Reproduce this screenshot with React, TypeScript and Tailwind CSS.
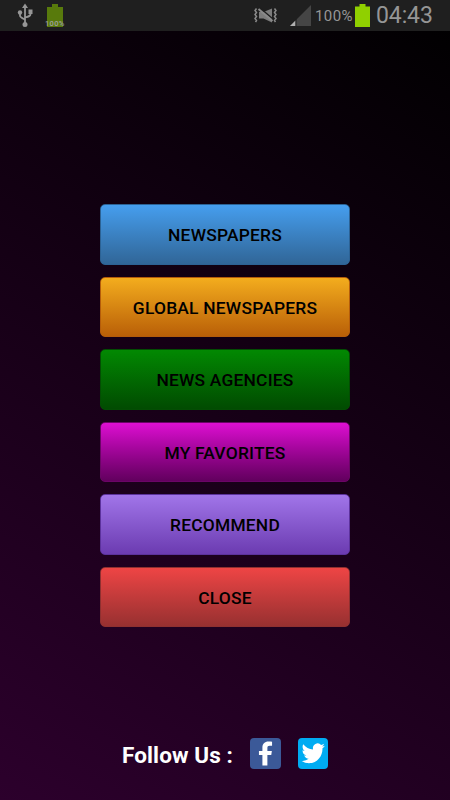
import type { ReactNode } from 'react'

interface MenuItem {
  label: string
  className: string
}

const MENU: MenuItem[] = [
  { label: 'NEWSPAPERS', className: 'from-[#469ff0] to-[#306596] border-[#2c6294]' },
  { label: 'GLOBAL NEWSPAPERS', className: 'from-[#f4ae1e] to-[#b85e07] border-[#b45c0a]' },
  { label: 'NEWS AGENCIES', className: 'from-[#028a02] to-[#014a01] border-[#034d03]' },
  { label: 'MY FAVORITES', className: 'from-[#e010d4] to-[#60005c] border-[#6a0566]' },
  { label: 'RECOMMEND', className: 'from-[#a276ea] to-[#6b3ab0] border-[#5c329c]' },
  { label: 'CLOSE', className: 'from-[#f04545] to-[#963030] border-[#8f3030]' },
]

export default function App(): React.JSX.Element {
  return (
    <div className="flex h-[800px] w-[450px] flex-col overflow-hidden bg-[linear-gradient(29.4deg,#2c002c,#000000)] font-[Roboto,sans-serif]">
      <StatusBar />
      <main className="flex flex-col items-center gap-[12px] pt-[173.4px]">
        {MENU.map((item) => (
          <button
            key={item.label}
            className={`h-[60.5px] w-[250px] rounded-[5px] border bg-linear-to-b bg-origin-border pt-px text-[17.4px] font-medium tracking-[0.22px] text-black ${item.className}`}
          >
            {item.label}
          </button>
        ))}
      </main>
      <footer className="mt-auto mb-[31px] flex h-[31px] items-center pl-[122px]">
        <span className="w-[128px] pt-[3px] text-[22.5px] leading-none font-bold tracking-[0.1px] whitespace-pre text-white">
          Follow Us :
        </span>
        <SocialButton className="bg-[#3b5998]" label="Facebook">
          <path
            fill="#fff"
            d="M12.2 27V16.8H8.8v-4h3.400V9.600c0-4 2.200-6.200 6-6.200 1.500 0 2.600.1 3.500.3v3.800h-2.300c-1.700 0-2.300.8-2.300 2.300v3h4.400l-.6 4h-3.800V27z"
          />
        </SocialButton>
        <SocialButton className="ml-[17px] bg-[#00acf2]" label="Twitter">
          <path
            fill="#fff"
            transform="translate(3.6 3) scale(.95 1)"
            d="M23.953 4.57a10 10 0 01-2.825.775 4.958 4.958 0 002.163-2.723c-.951.555-2.005.959-3.127 1.184a4.92 4.92 0 00-8.384 4.482C7.69 8.095 4.067 6.13 1.64 3.162a4.822 4.822 0 00-.666 2.475c0 1.71.87 3.213 2.188 4.096a4.904 4.904 0 01-2.228-.616v.06a4.923 4.923 0 003.946 4.827 4.996 4.996 0 01-2.212.085 4.936 4.936 0 004.604 3.417 9.867 9.867 0 01-6.102 2.105c-.39 0-.779-.023-1.17-.067a13.995 13.995 0 007.557 2.209c9.053 0 13.998-7.496 13.998-13.985 0-.21 0-.42-.015-.63A9.935 9.935 0 0024 4.59z"
          />
        </SocialButton>
      </footer>
    </div>
  )
}

function StatusBar(): React.JSX.Element {
  return (
    <header className="flex h-[31px] shrink-0 items-center bg-[#1f1f1f] text-[#969696]">
      <UsbIcon />
      <div className="relative ml-[12px] h-[23px] w-[20px]">
        <svg className="ml-[2px] h-[23px] w-[16px]" viewBox="0 0 16 23" fill="#587a0c">
          <path d="M5 0h6v3h5v20H0V3h5z" />
        </svg>
        <span className="absolute bottom-0 left-0 text-[7.5px] leading-[7px] font-medium tracking-[0.3px] text-[#a0a0a0]">
          100%
        </span>
      </div>
      <VibrateIcon />
      <svg className="ml-[12px] h-[21px] w-[21px]" viewBox="0 0 21 21">
        <path d="M21 0v21H0z" fill="#454545" />
        <path d="M5.5 15.5V21H0z" fill="#b0b0b0" />
        <path d="M6 14v7" stroke="#1f1f1f" />
      </svg>
      <span className="ml-[4px] w-[39px] pt-[2px] text-[15px] tracking-[0.4px] whitespace-nowrap">100%</span>
      <svg className="ml-px h-[23px] w-[15px]" viewBox="0 0 15 23" fill="#90d000">
        <path d="M4.500 0h6v2.500H15V23H0V2.500h4.500z" />
      </svg>
      <span className="ml-[6px] text-[23px] leading-none tracking-[-0.1px]">04:43</span>
    </header>
  )
}

function UsbIcon(): React.JSX.Element {
  return (
    <svg className="ml-[17px] h-[25px] w-[16px]" viewBox="0 0 16 25" fill="#969696">
      <path d="M8 0.500l3 4.500H5z" />
      <path
        d="M8 4v17M3 9v3.500c0 2 1.500 2.500 5 4M13.500 8v3c0 2-1.500 2.500-5.500 3.500"
        fill="none"
        stroke="#969696"
        strokeWidth="1.800"
      />
      <circle cx="3" cy="9.500" r="2.200" />
      <path d="M11.500 6.500h4v4.500h-4z" />
      <circle cx="8" cy="21.500" r="2.500" />
    </svg>
  )
}

function VibrateIcon(): React.JSX.Element {
  return (
    <svg className="ml-[189px] h-[17px] w-[24px]" viewBox="0 0 24 17">
      <path
        d="M2.500 1.500l-1.500 2 1.500 2-1.500 2 1.500 2-1.500 2 1.500 2-1 1.500M20.500 1.500l1.500 2-1.500 2 1.500 2-1.500 2 1.500 2-1.500 2 1 1.500"
        fill="none"
        stroke="#8a8a8a"
        strokeWidth="1.500"
      />
      <path d="M5 5h4.500L18 1.500v14L9.500 11.500H5z" fill="#7c7c7c" />
      <path d="M6 1l13 11" stroke="#1f1f1f" strokeWidth="1.500" />
      <path d="M4.500 2l14 12" stroke="#8a8a8a" strokeWidth="2" />
    </svg>
  )
}

interface SocialButtonProps {
  label: string
  className: string
  children: ReactNode
}

function SocialButton({ label, className, children }: SocialButtonProps): React.JSX.Element {
  return (
    <a aria-label={label} className={`size-[30.5px] rounded-[4px] ${className}`}>
      <svg className="size-full" viewBox="0 0 30 30">
        {children}
      </svg>
    </a>
  )
}
